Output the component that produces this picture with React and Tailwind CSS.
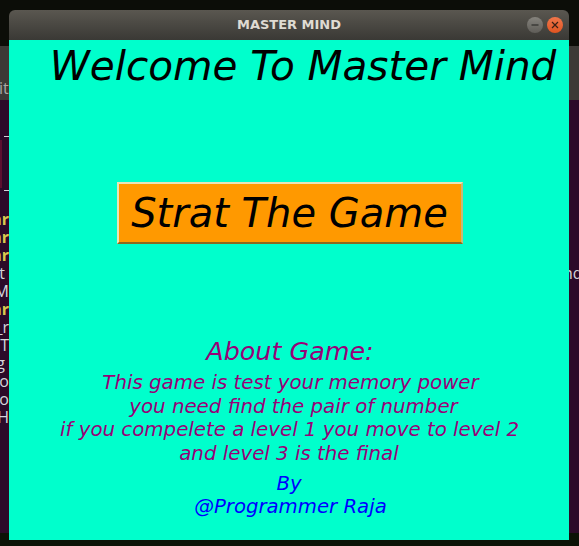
import React from "react";

const rows = [
  ["nr", true],
  ["nr", true],
  ["nr", true],
  ["t ", false],
  ["M", false],
  ["nr", true],
  ["_r", false],
  [". T", false],
  ["g ", false],
  ["ro", false],
  ["vo", false],
  ["rH", false],
];

function Desktop() {
  return (
    <div className="flex h-[546px] w-[579px] flex-col overflow-hidden font-['Open_Sans',sans-serif]">
      <div className="h-[46px] shrink-0 bg-[#0c0d08]" />
      <div className="flex h-[54px] shrink-0 items-end bg-[#3c3a36] pb-[2px] text-[16px] leading-[20px] text-[#a9a8a3]">
        <span className="ml-[-1px] whitespace-pre">it</span>
      </div>
      <div className="flex flex-1 bg-[#2c0a29] text-[16px] leading-[18px]">
        <div className="relative flex w-[9px] shrink-0 flex-col items-end overflow-hidden">
          <div className="mt-[36px] h-px w-[5px] bg-[#d3d0d8]" />
          <div className="mt-[3px] h-[48px] w-[2px] self-start bg-[#5c1030]" />
          <div className="mt-[2px] h-px w-[5px] bg-[#d3d0d8]" />
          <div className="mt-[19px] flex flex-col items-end">
            {rows.map(([text, accent], i) => (
              <span
                key={i}
                className={accent ? "whitespace-pre font-bold text-[#d9c84e]" : "whitespace-pre text-[#d6d3da]"}
              >
                {text}
              </span>
            ))}
          </div>
        </div>
        <div className="flex-1" />
        <div className="w-[10px] shrink-0 overflow-hidden pt-[164px] text-[#d6d3da]">
          <span className="ml-[-6px] whitespace-pre">nd</span>
        </div>
      </div>
      <div className="h-[13px] shrink-0 bg-[#0c1206]" />
    </div>
  );
}

function Window() {
  return (
    <div className="absolute left-[9px] top-[10px] flex h-[530px] w-[560px] flex-col font-['DejaVu_Sans',sans-serif]">
      <div className="relative flex h-[30px] shrink-0 items-center justify-center rounded-t-[6px] bg-gradient-to-b from-[#5a5750] to-[#3a3935]">
        <span className="text-[13px] font-bold text-[#dfdbd2]">MASTER MIND</span>
        <div className="absolute right-[6px] top-[7px] flex gap-[4px]">
          <span className="flex h-[16px] w-[16px] items-center justify-center rounded-full bg-gradient-to-b from-[#85837d] to-[#5f5d58]">
            <svg width="10" height="10" viewBox="0 0 10 10"><path d="M1.5 5h7" stroke="#2e2d2a" strokeWidth="1.2" /></svg>
          </span>
          <span className="flex h-[16px] w-[16px] items-center justify-center rounded-full bg-gradient-to-b from-[#f0764a] to-[#e0541f]">
            <svg width="10" height="10" viewBox="0 0 10 10"><path d="M2 2l6 6M8 2l-6 6" stroke="#3a2015" strokeWidth="1.2" /></svg>
          </span>
        </div>
      </div>
      <div className="flex flex-1 flex-col items-center bg-[#00ffcc] italic">
        <h1 className="ml-[28px] mt-[1px] whitespace-nowrap text-[40.5px] font-normal leading-[50px] text-black">Welcome To Master Mind</h1>
        <button className="ml-[1px] mt-[91px] h-[62px] w-[346px] border-2 border-b-[#8a6a20] border-l-[#e9e4b8] border-r-[#c9b878] border-t-[#e9e4b8] bg-[#ff9900] text-[40px] leading-none text-black">
          Strat The Game
        </button>
        <p className="ml-[2px] mt-[92px] text-[25.4px] leading-[30px] text-[#990077]">About Game:</p>
        <div className="mt-[5px] flex flex-col items-center whitespace-nowrap text-[19.8px] leading-[23.7px] text-[#990077]">
          <span className="ml-[3px]">This game is test your memory power</span>
          <span className="ml-[9px]">you need find the pair of number</span>
          <span className="ml-[1px]">if you compelete a level 1 you move to level 2</span>
          <span>and level 3 is the final</span>
        </div>
        <div className="mt-[6px] flex flex-col items-center text-[19.7px] leading-[23px] text-[#0000ff]">
          <span>By</span>
          <span className="ml-[3px]">@Programmer Raja</span>
        </div>
      </div>
    </div>
  );
}

export default function App() {
  return (
    <div className="relative h-[546px] w-[579px] overflow-hidden">
      <Desktop />
      <Window />
    </div>
  );
}
